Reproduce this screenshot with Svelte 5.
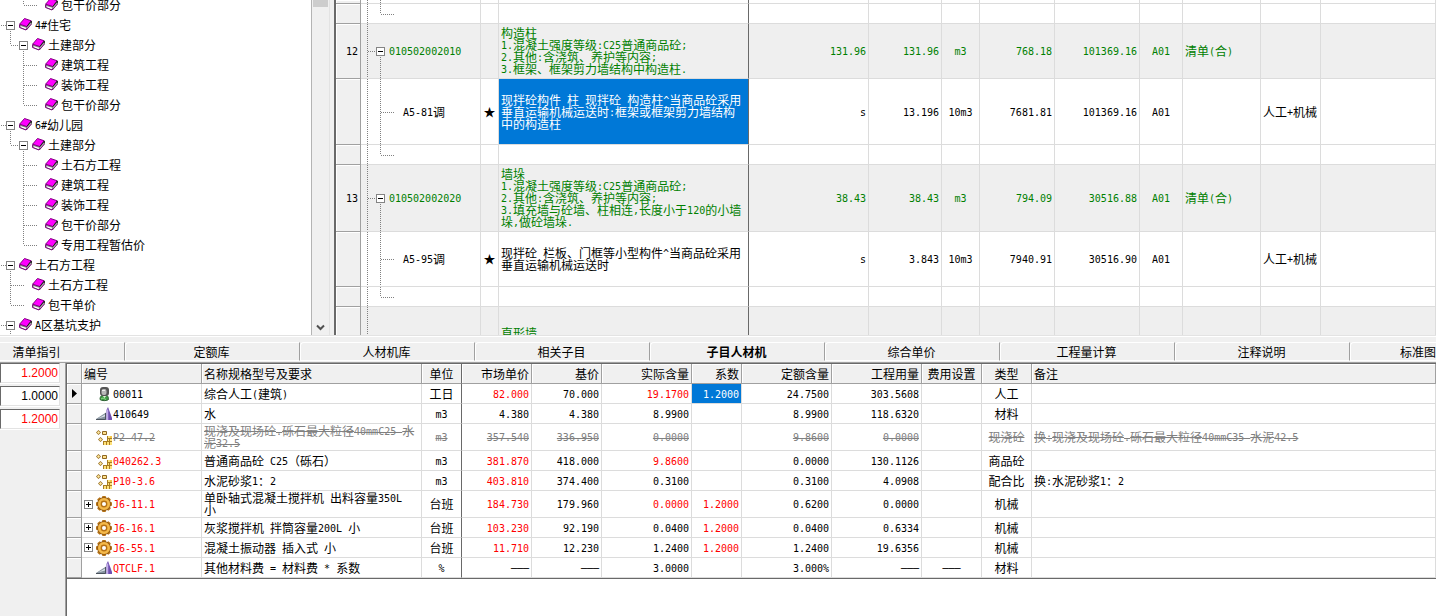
<script>
  const tree = [
    { name: '包干价部分', depth: 2, last: true },
    { name: '4#住宅', depth: 0, open: true },
    { name: '土建部分', depth: 1, open: true, last: true },
    { name: '建筑工程', depth: 2 },
    { name: '装饰工程', depth: 2 },
    { name: '包干价部分', depth: 2, last: true },
    { name: '6#幼儿园', depth: 0, open: true },
    { name: '土建部分', depth: 1, open: true, last: true },
    { name: '土石方工程', depth: 2 },
    { name: '建筑工程', depth: 2 },
    { name: '装饰工程', depth: 2 },
    { name: '包干价部分', depth: 2 },
    { name: '专用工程暂估价', depth: 2, last: true },
    { name: '土石方工程', depth: 0, open: true },
    { name: '土石方工程', depth: 1 },
    { name: '包干单价', depth: 1, last: true },
    { name: 'A区基坑支护', depth: 0, open: true }
  ];

  const bill = [
    { kind: 'child', size: 'sliver' },
    { kind: 'end', size: 'short' },
    {
      kind: 'head', size: 'mid', no: '12', code: '010502002010',
      desc: '构造柱\n1.混凝土强度等级:C25普通商品砼;\n2.其他:含浇筑、养护等内容;\n3.框架、框架剪力墙结构中构造柱.',
      expr: '131.96', qty: '131.96', unit: 'm3', price: '768.18', total: '101369.16', cls: 'A01', kindName: '清单(合)'
    },
    {
      kind: 'child', size: 'tall', code: 'A5-81调', star: true, selected: true,
      desc: '现拌砼构件 柱 现拌砼 构造柱^当商品砼采用\n垂直运输机械运送时:框架或框架剪力墙结构\n中的构造柱',
      expr: 's', qty: '13.196', unit: '10m3', price: '7681.81', total: '101369.16', cls: 'A01', mode: '人工+机械'
    },
    { kind: 'end', size: 'short' },
    {
      kind: 'head', size: 'taller', no: '13', code: '010502002020',
      desc: '墙垛\n1.混凝土强度等级:C25普通商品砼;\n2.其他:含浇筑、养护等内容;\n3.填充墙与砼墙、柱相连,长度小于120的小墙\n垛,做砼墙垛.',
      expr: '38.43', qty: '38.43', unit: 'm3', price: '794.09', total: '30516.88', cls: 'A01', kindName: '清单(合)'
    },
    {
      kind: 'child', size: 'mid', code: 'A5-95调', star: true,
      desc: '现拌砼 栏板、门框等小型构件^当商品砼采用\n垂直运输机械运送时',
      expr: 's', qty: '3.843', unit: '10m3', price: '7940.91', total: '30516.90', cls: 'A01', mode: '人工+机械'
    },
    { kind: 'end', size: 'short' },
    { kind: 'next', size: 'taller', desc: '直形墙' }
  ];

  const tabs = ['清单指引', '定额库', '人材机库', '相关子目', '子目人材机', '综合单价', '工程量计算', '注释说明', '标准图'];
  let active = $state(4);

  const factors = [
    { label: '人工系数', value: '1.2000', red: true },
    { label: '材料系数', value: '1.0000' },
    { label: '机械系数', value: '1.2000', red: true }
  ];

  const dash = '───';
  const parts = [
    { icon: 'person', code: '00011', name: '综合人工(建筑)', unit: '工日', market: '82.000', mRed: true, base: '70.000', actual: '19.1700', aRed: true, coef: '1.2000', picked: true, quota: '24.7500', usage: '303.5608', type: '人工', current: true },
    { icon: 'wedge', code: '410649', name: '水', unit: 'm3', market: '4.380', base: '4.380', actual: '8.9900', quota: '8.9900', usage: '118.6320', type: '材料' },
    { icon: 'blocks', code: 'P2-47.2', name: '现浇及现场砼.砾石最大粒径40mmC25 水\n泥32.5', unit: 'm3', market: '357.540', base: '336.950', actual: '0.0000', quota: '9.8600', usage: '0.0000', type: '现浇砼', note: '换:现浇及现场砼.砾石最大粒径40mmC35 水泥42.5', removed: true, double: true },
    { icon: 'blocks', code: '040262.3', cRed: true, name: '普通商品砼 C25（砾石）', unit: 'm3', market: '381.870', mRed: true, base: '418.000', actual: '9.8600', aRed: true, quota: '0.0000', usage: '130.1126', type: '商品砼' },
    { icon: 'blocks', code: 'P10-3.6', cRed: true, name: '水泥砂浆1：2', unit: 'm3', market: '403.810', mRed: true, base: '374.400', actual: '0.3100', quota: '0.3100', usage: '4.0908', type: '配合比', note: '换:水泥砂浆1：2' },
    { icon: 'gear', code: 'J6-11.1', cRed: true, plus: true, name: '单卧轴式混凝土搅拌机 出料容量350L\n小', unit: '台班', market: '184.730', mRed: true, base: '179.960', actual: '0.0000', aRed: true, coef: '1.2000', quota: '0.6200', usage: '0.0000', type: '机械', double: true },
    { icon: 'gear', code: 'J6-16.1', cRed: true, plus: true, name: '灰浆搅拌机 拌筒容量200L 小', unit: '台班', market: '103.230', mRed: true, base: '92.190', actual: '0.0400', coef: '1.2000', quota: '0.0400', usage: '0.6334', type: '机械' },
    { icon: 'gear', code: 'J6-55.1', cRed: true, plus: true, name: '混凝土振动器 插入式 小', unit: '台班', market: '11.710', mRed: true, base: '12.230', actual: '1.2400', coef: '1.2000', quota: '1.2400', usage: '19.6356', type: '机械' },
    { icon: 'wedge', code: 'QTCLF.1', cRed: true, name: '其他材料费 = 材料费 * 系数', unit: '%', market: dash, base: dash, actual: '3.0000', quota: '3.000%', usage: dash, fee: dash, type: '材料' }
  ];

  // Splits a string into half-width and full-width runs so each gets its own face.
  const runs = (s) => (s ?? '').match(/[\x20-\x7e─]+|[^\x20-\x7e─]+/g) ?? [];
  const isHalf = (s) => /^[\x20-\x7e─]/.test(s);
</script>

{#snippet t(s)}{#each runs(s) as r}<span class={isHalf(r) ? 'h' : 'f'}>{r}</span>{/each}{/snippet}

{#snippet book()}
  <svg class="book" width="13" height="13" viewBox="0 0 13 13" aria-hidden="true">
    <path d="M.5 6.500v3l6 2.500h1.500L12.500 6V3z" fill="#808080" />
    <path d="M1.500 8v1.200l5 2.100.8-1.500z" fill="#fff" />
    <path d="M8 9.500l4-4.500v1L8 11z" fill="#d4d4d4" />
    <path d="M5.500.5l6.700 2.300L7.800 8.500.6 6.200z" fill="#f0f" stroke="#800080" />
    <path d="M7.800 8.500l4.600-5.500v2.500" fill="none" stroke="#222" />
    <path d="M.6 6.500v3l6.400 2.500L12.500 6" fill="none" stroke="#707" />
  </svg>
{/snippet}

{#snippet icon(name)}
  <svg width="16" height="16" viewBox="0 0 16 16" aria-hidden="true">
    {#if name === 'person'}
      <path d="M4 13.500c0-3.500 2-4.500 4.500-4.500s4 1 4 4.500c-1 1.500-7.500 1.500-8.500 0z" fill="#3f9a45" stroke="#2d6232" />
      <path d="M6.500 9.500l2 2.500 2-2.500z" fill="#e7f5e2" />
      <rect x="4" y="1" width="9" height="9" rx="3" fill="#555" />
      <rect x="5.500" y="3" width="5" height="6" rx="2" fill="#b9b9b9" />
      <path d="M6 4.500h3" stroke="#eee" />
      <path d="M5 13l2-1 3 1.500" fill="none" stroke="#8fdc86" />
    {:else if name === 'wedge'}
      <path d="M0 13L10 6.500V14H0z" fill="#84919d" />
      <path d="M2 12.500l7-4v2z" fill="#d7dfe5" />
      <path d="M0 13.500h9.500V7" fill="none" stroke="#4b535d" />
      <path d="M10.500 14V4l1.500-3 4 11v2z" fill="#6f4fb0" />
      <path d="M11.500 3.500V14" stroke="#c0acea" stroke-width="1.500" />
    {:else if name === 'blocks'}
      <path d="M2.500 1L5 3.500 2.500 6 0 3.500zM4.500 8L7 10.500 4.500 13 2 10.500z" fill="#9c7428" />
      <path d="M2.500 2l1.500 1.500-1.500 1.500L1 3.500zM4.500 9l1.500 1.500L4.500 12 3 10.500z" fill="#ffe9a0" />
      <path d="M6.500 2.500h4v3h-4z" fill="#ffe08a" stroke="#8f6823" />
      <path d="M11 7h5v9H7v-4h4z" fill="#a87c22" />
      <g fill="#ffe27a">
        <rect x="12" y="7" width="2" height="2" /><rect x="14" y="7" width="2" height="2" fill="#f3c545" />
        <rect x="12" y="10" width="1" height="2" /><rect x="14" y="10" width="2" height="2" />
        <rect x="8" y="13" width="2" height="3" /><rect x="11" y="13" width="2" height="3" /><rect x="14" y="13" width="2" height="3" />
      </g>
    {:else}
      <g fill="#b67216">
        <rect x="6" y="0" width="4" height="16" rx="1" />
        <rect x="6" y="0" width="4" height="16" rx="1" transform="rotate(45 8 8)" />
        <rect x="6" y="0" width="4" height="16" rx="1" transform="rotate(90 8 8)" />
        <rect x="6" y="0" width="4" height="16" rx="1" transform="rotate(135 8 8)" />
        <circle cx="8" cy="8" r="6.500" stroke="#7b4a12" stroke-width=".6" />
      </g>
      <circle cx="8" cy="8" r="4.700" fill="none" stroke="#f4b94a" stroke-width="2.600" />
      <circle cx="8" cy="8" r="3" fill="#b67216" />
      <circle cx="8" cy="8" r="2" fill="#fff" />
    {/if}
  </svg>
{/snippet}

{#snippet box(plus)}
  <button class="box" aria-label={plus ? '展开' : '折叠'}>
    <svg width="9" height="9" viewBox="0 0 9 9" aria-hidden="true">
      <path d={plus ? 'M2 4.500h5M4.500 2v5' : 'M2 4.500h5'} stroke="#000" />
    </svg>
  </button>
{/snippet}

<div class="app">
  <div class="top">
    <nav class="tree" aria-label="工程结构">
      <ul>
        {#each tree as n}
          <li class="d{n.depth}">
            <svg class="guides" width="40" height="20" aria-hidden="true">
              {#if n.depth === 0}
                <path d="M1 10.500h9M10.500 10v10" />
              {:else if n.depth === 1}
                <path d={n.last ? 'M10.500 0v10M11 10.500h13' : 'M10.500 0v20M11 10.500h13'} />
                {#if n.open}<path d="M23.500 10v10" />{/if}
              {:else}
                <path d={n.last ? 'M23.500 0v10M24 10.500h13' : 'M23.500 0v20M24 10.500h13'} />
              {/if}
            </svg>
            {#if n.open}{@render box(false)}{:else}<span class="nobox"></span>{/if}
            {@render book()}
            <span>{@render t(n.name)}</span>
          </li>
        {/each}
      </ul>
      <div class="scroll">
        <div class="thumb"></div>
        <button class="down" aria-label="向下滚动">
          <svg width="9" height="7" viewBox="0 0 9 7" aria-hidden="true"><path d="M1 1.500l3.500 3.500L8 1.500" fill="none" stroke="#505050" stroke-width="2" /></svg>
        </button>
      </div>
    </nav>

    <div class="bill">
      <table>
        <colgroup>
          <col class="w25" /><col class="w120" /><col class="w18" /><col class="w250" /><col class="w120" /><col class="w73" /><col class="w38" /><col class="w75" /><col class="w85" /><col class="w43" /><col class="w78" /><col class="w60" /><col />
        </colgroup>
        <tbody>
          {#each bill as r}
            <tr class="{r.kind} {r.size}">
              <th scope="row">{@render t(r.no)}</th>
              <td class="code">
                <svg class="lines" width="100%" height="100%" aria-hidden="true">
                  <line x1="6.500" y1="0" x2="6.500" y2="100%" />
                  {#if r.kind === 'head'}
                    <svg y="50%" overflow="visible"><line x1="7" y1=".5" x2="16" y2=".5" /></svg>
                    <line x1="19.500" y1="50%" x2="19.500" y2="100%" />
                  {:else if r.kind !== 'next'}
                    <line x1="19.500" y1="0" x2="19.500" y2={r.kind === 'end' ? '50%' : '100%'} />
                    {#if r.size !== 'sliver'}<svg y="50%" overflow="visible"><line x1="20" y1=".5" x2="33" y2=".5" /></svg>{/if}
                  {/if}
                </svg>
                {#if r.code}
                  <div class="codebox">{#if r.kind === 'head'}{@render box(false)}{/if}<span>{@render t(r.code)}</span></div>
                {/if}
              </td>
              <td class="c star">{r.star ? '★' : ''}</td>
              <td class="desc" class:selected={r.selected}>{@render t(r.desc)}</td>
              <td class="r">{@render t(r.expr)}</td>
              <td class="r">{@render t(r.qty)}</td>
              <td class="c">{@render t(r.unit)}</td>
              <td class="r">{@render t(r.price)}</td>
              <td class="r">{@render t(r.total)}</td>
              <td class="c">{@render t(r.cls)}</td>
              <td>{@render t(r.kindName)}</td>
              <td>{@render t(r.mode)}</td>
              <td></td>
            </tr>
          {/each}
        </tbody>
      </table>
    </div>
  </div>

  <div class="bottom">
    <div class="tabs" role="tablist">
      {#each tabs as name, i}
        <button role="tab" aria-selected={i === active} class:active={i === active} onclick={() => (active = i)}>{name}</button>
      {/each}
    </div>
    <div class="detail">
      <div class="factors">
        {#each factors as f}
          <input aria-label={f.label} value={f.value} class:red={f.red} />
        {/each}
      </div>
      <div class="grid">
        <table>
          <colgroup>
            <col class="w15" /><col class="w120" /><col class="w220" /><col class="w40" /><col class="w70" /><col class="w70" /><col class="w90" /><col class="w50" /><col class="w90" /><col class="w90" /><col class="w60" /><col class="w50" /><col />
          </colgroup>
          <thead>
            <tr>
              <th></th><th>编号</th><th>名称规格型号及要求</th><th class="c">单位</th><th class="r">市场单价</th><th class="r">基价</th><th class="r">实际含量</th><th class="r">系数</th><th class="r">定额含量</th><th class="r">工程用量</th><th class="c">费用设置</th><th class="c">类型</th><th>备注</th>
            </tr>
          </thead>
          <tbody>
            {#each parts as p}
              <tr class:double={p.double} class:removed={p.removed}>
                <th scope="row">
                  {#if p.current}<svg class="arrow" width="6" height="9" viewBox="0 0 6 9" aria-hidden="true"><path d="M0 0l5 4.500L0 9z" /></svg>{/if}
                </th>
                <td class="item">
                  <div>
                    {#if p.plus}{@render box(true)}{:else}<span class="nobox"></span>{/if}
                    {@render icon(p.icon)}
                    <span class:red={p.cRed}>{@render t(p.code)}</span>
                  </div>
                </td>
                <td class="pre">{@render t(p.name)}</td>
                <td class="c">{@render t(p.unit)}</td>
                <td class="r" class:red={p.mRed}>{@render t(p.market)}</td>
                <td class="r">{@render t(p.base)}</td>
                <td class="r" class:red={p.aRed}>{@render t(p.actual)}</td>
                <td class="r red" class:selected={p.picked}>{@render t(p.coef)}</td>
                <td class="r">{@render t(p.quota)}</td>
                <td class="r">{@render t(p.usage)}</td>
                <td class="c">{@render t(p.fee)}</td>
                <td class="c">{@render t(p.type)}</td>
                <td>{@render t(p.note)}</td>
              </tr>
            {/each}
          </tbody>
        </table>
      </div>
    </div>
  </div>
</div>

<style>
  :global(body) { margin: 0; }
  .app {
    display: grid;
    grid-template-columns: minmax(0, 1fr);
    grid-template-rows: minmax(0, 336fr) minmax(0, 280fr);
    height: 100vh;
    overflow: hidden;
    background: #f0f0f0;
    color: #000;
    font: 12px/12px "Noto Sans CJK SC", sans-serif;
  }
  .h {
    font-family: "DejaVu Sans Mono", monospace;
    font-size: 10px;
    line-height: 0;
    vertical-align: 1px;
  }
  button { padding: 0; border: 0; background: none; font: inherit; color: inherit; }

  .top { display: flex; min-height: 0; border-bottom: 1px solid #e3e3e3; }

  .tree {
    display: flex;
    flex: none;
    width: 330px;
    margin-right: 4px;
    overflow: hidden;
    background: #fff;
    border-right: 1px solid #e3e3e3;
    box-sizing: border-box;
  }
  ul { flex: 1; min-width: 0; margin: -5px 0 0; padding: 0; list-style: none; }
  li { position: relative; display: flex; align-items: center; height: 20px; white-space: nowrap; }
  .d0 { padding-left: 6px; }
  .d1 { padding-left: 19px; }
  .d2 { padding-left: 32px; }
  .guides { position: absolute; left: 0; top: 0; }
  .guides path, .lines line {
    fill: none;
    stroke: #808080;
    stroke-dasharray: 1 1;
    shape-rendering: crispEdges;
  }
  .box {
    position: relative;
    flex: none;
    width: 9px;
    height: 9px;
    background: #fff;
    box-shadow: inset 0 0 0 1px #848484;
  }
  .box svg { display: block; }
  .nobox { flex: none; width: 9px; }
  .book { flex: none; position: relative; margin: 0 3px 2px 4px; }

  .scroll {
    display: flex;
    flex-direction: column;
    justify-content: space-between;
    width: 15px;
    padding: 0 1px;
    background: #f0f0f0;
    border-left: 1px solid #b4b4b4;
  }
  .thumb { height: 7px; background: #cdcdcd; }
  .down { height: 16px; display: grid; place-items: center; }

  .bill { flex: 1; min-width: 0; overflow: hidden; background: #fff; border-left: 2px solid #696969; }
  table { width: 100%; table-layout: fixed; border-collapse: separate; border-spacing: 0; }
  td, th {
    box-sizing: border-box;
    padding: 0 2px;
    overflow: hidden;
    white-space: nowrap;
    font-weight: normal;
    text-align: left;
    border-right: 1px solid #dcdcdc;
    border-bottom: 1px solid #dcdcdc;
  }
  .c { text-align: center; padding: 0; }
  .r { text-align: right; }
  .bill th {
    text-align: right;
    background: #f0f0f0;
    border-right-color: #a0a0a0;
    border-bottom-color: #a0a0a0;
    box-shadow: inset 1px 1px #fff;
  }
  .sliver { height: 4px; }
  .sliver td, .sliver th { line-height: 0; }
  .short { height: 20px; }
  .mid { height: 55px; }
  .tall { height: 66px; }
  .taller { height: 67px; }
  .head td, .next td { background: #efefef; color: #008000; }
  td.desc { white-space: pre; border-right-color: #696969; }
  .next td { vertical-align: top; padding-top: 20px; }
  td.selected { background: #0078d7; color: #fff; }
  .code { position: relative; }
  .lines { position: absolute; inset: 0; }
  .codebox { position: relative; display: flex; align-items: center; gap: 4px; padding-left: 13px; }
  .child .codebox { padding-left: 40px; }

  .bottom { display: flex; flex-direction: column; min-width: 0; min-height: 0; border-top: 1px solid #fff; }
  .tabs { display: flex; overflow: hidden; padding-top: 5px; margin-left: -50px; height: 20px; }
  .tabs button {
    box-sizing: border-box;
    flex: none;
    width: 175px;
    height: 19px;
    padding-right: 2px;
    border-top: 1px solid #fff;
    border-left: 1px solid #fff;
    border-right: 1px solid #a0a0a0;
    border-bottom: 1px solid #fff;
    border-top-left-radius: 4px;
  }
  .tabs button:last-child { flex: 1; min-width: 0; padding: 0; border-right: 0; text-align: right; }
  .tabs .active { font-weight: bold; border-bottom-color: #f0f0f0; }
  .detail { display: flex; flex: 1; min-height: 0; border-top: 1px solid #a0a0a0; }
  .factors { display: flex; flex-direction: column; gap: 3px; width: 60px; margin-right: 6px; }
  .factors input {
    box-sizing: border-box;
    width: 100%;
    height: 20px;
    padding: 0 1px;
    border: 1px solid;
    border-color: #696969 #e3e3e3 #e3e3e3 #696969;
    border-radius: 0;
    box-shadow: 0 1px #fff;
    background: #fff;
    font: 12px "Liberation Sans", sans-serif;
    text-align: right;
    outline: 0;
  }
  .red, .factors .red { color: #f00; }
  .grid { flex: 1; min-width: 0; background: #fff; border-left: 1px solid #696969; border-top: 1px solid #696969; box-shadow: -1px 0 #a0a0a0; }
  .grid table { border-bottom: 1px solid #696969; }
  .grid tr { height: 20px; }
  .grid .double { height: 27px; }
  .grid th {
    background: #f0f0f0;
    border-color: #a0a0a0;
    box-shadow: inset 1px 1px #fff;
  }
  .grid td:nth-child(4), .grid th:nth-child(4) { border-right-color: #696969; }
  .pre { white-space: pre; }
  .item div { display: flex; align-items: center; gap: 3px; }
  .item svg { flex: none; margin-right: -2px; }
  .item .box svg { margin: 0; }
  .removed td { color: #808080; }
  .removed .h, .removed .f { text-decoration: line-through; }
  .arrow { display: block; margin-left: 3px; }
  .w15 { width: 15px; } .w18 { width: 18px; } .w25 { width: 25px; } .w38 { width: 38px; }
  .w40 { width: 40px; } .w43 { width: 43px; } .w50 { width: 50px; } .w60 { width: 60px; }
  .w70 { width: 70px; } .w73 { width: 73px; } .w75 { width: 75px; } .w78 { width: 78px; }
  .w85 { width: 85px; } .w90 { width: 90px; } .w120 { width: 120px; } .w220 { width: 220px; } .w250 { width: 250px; }
</style>
